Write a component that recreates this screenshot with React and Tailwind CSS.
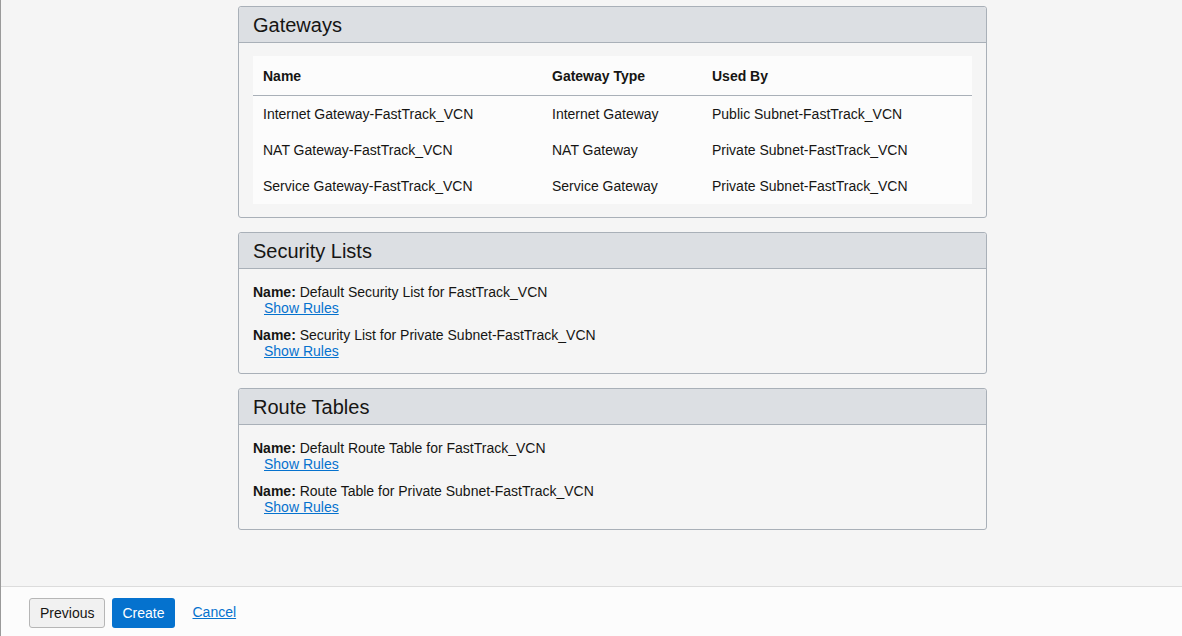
const gateways = [
  ["Internet Gateway-FastTrack_VCN", "Internet Gateway", "Public Subnet-FastTrack_VCN"],
  ["NAT Gateway-FastTrack_VCN", "NAT Gateway", "Private Subnet-FastTrack_VCN"],
  ["Service Gateway-FastTrack_VCN", "Service Gateway", "Private Subnet-FastTrack_VCN"],
];

const securityLists = [
  "Default Security List for FastTrack_VCN",
  "Security List for Private Subnet-FastTrack_VCN",
];

const routeTables = [
  "Default Route Table for FastTrack_VCN",
  "Route Table for Private Subnet-FastTrack_VCN",
];

function Panel({ title, children, bodyClass = "px-[14px] py-[13px]" }) {
  return (
    <section className="border border-[#a9b0b8] rounded-[3px] bg-[#f5f5f5]">
      <div className="h-[36px] bg-[#dcdfe3] border-b border-[#a9b0b8] px-[14px] flex items-center rounded-t-[3px]">
        <h2 className="text-[20px] text-[#161513] leading-none">{title}</h2>
      </div>
      <div className={bodyClass}>{children}</div>
    </section>
  );
}

function NameList({ items }) {
  return (
    <div className="flex flex-col gap-[11px]">
      {items.map((name) => (
        <div key={name} className="text-[14px] leading-[16px] text-[#161513]">
          <div>
            <span className="font-bold">Name:</span> {name}
          </div>
          <a href="#" className="ml-[11px] text-[#0572ce] underline">
            Show Rules
          </a>
        </div>
      ))}
    </div>
  );
}

export default function App() {
  return (
    <div
      className="w-[1182px] h-[636px] flex flex-col bg-[#f5f5f5] border-l border-[#9a9a9a] overflow-hidden"
      style={{ fontFamily: '"Liberation Sans", Arial, sans-serif' }}
    >
      <main className="flex-1 pt-[6px] pl-[237px]">
        <div className="w-[749px] flex flex-col gap-[14px]">
          <Panel title="Gateways">
            <table className="w-full bg-[#fcfcfc] text-[14px] text-[#161513] border-collapse">
              <thead>
                <tr className="h-[39px] border-b border-[#a9b0b8] text-left">
                  <th className="font-bold pl-[10px] pt-[2px] w-[289px]">Name</th>
                  <th className="font-bold pl-[10px] pt-[2px] w-[160px]">Gateway Type</th>
                  <th className="font-bold pl-[10px] pt-[2px]">Used By</th>
                </tr>
              </thead>
              <tbody>
                {gateways.map((row, i) => (
                  <tr key={row[0]} className={i === 0 ? "h-[37px]" : "h-[36px]"}>
                    {row.map((cell) => (
                      <td key={cell} className={i === 0 ? "pl-[10px] pt-px" : "pl-[10px]"}>
                        {cell}
                      </td>
                    ))}
                  </tr>
                ))}
              </tbody>
            </table>
          </Panel>
          <Panel title="Security Lists" bodyClass="px-[14px] pt-[15px] pb-[14px]">
            <NameList items={securityLists} />
          </Panel>
          <Panel title="Route Tables" bodyClass="px-[14px] pt-[15px] pb-[14px]">
            <NameList items={routeTables} />
          </Panel>
        </div>
      </main>
      <footer className="h-[50px] bg-[#fcfcfc] border-t border-[#dcdcdc] flex items-start pt-[11px] pl-[28px] gap-[7px] shrink-0">
        <button className="h-[30px] px-[10px] bg-[#f1f1f1] border border-[#b6b6b6] rounded-[3px] text-[14px] text-[#161513]">
          Previous
        </button>
        <button className="h-[30px] px-[10px] bg-[#0572ce] rounded-[3px] text-[14px] text-white">
          Create
        </button>
        <a href="#" className="ml-[11px] mt-[6px] text-[14px] leading-[16px] text-[#0572ce] underline">
          Cancel
        </a>
      </footer>
    </div>
  );
}
